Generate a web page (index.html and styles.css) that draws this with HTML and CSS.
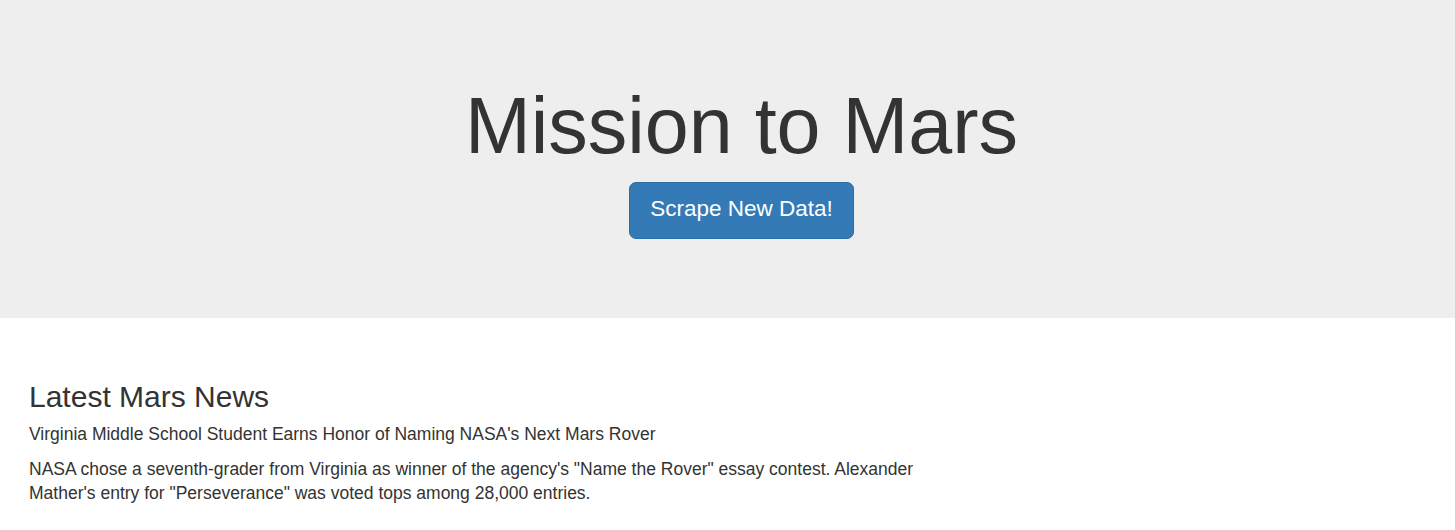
FILE: index.html
```html
<!DOCTYPE html>
<html lang="en">
<head>
<meta charset="utf-8">
<title>Mission to Mars</title>
<link rel="stylesheet" href="styles.css">
</head>
<body>
<header class="jumbotron">
  <h1 class="title">Mission to Mars</h1>
  <div class="actions">
    <a class="btn-primary" href="#">Scrape New Data!</a>
  </div>
</header>
<main class="content">
  <section class="news">
    <h3 class="news-heading">Latest Mars News</h3>
    <h4 class="news-title">Virginia Middle School Student Earns Honor of Naming NASA's Next Mars Rover</h4>
    <p class="news-body">NASA chose a seventh-grader from Virginia as winner of the agency's "Name the Rover" essay contest. Alexander Mather's entry for "Perseverance" was voted tops among 28,000 entries.</p>
  </section>
</main>
</body>
</html>
```
FILE: styles.css
```css
html, body {
  margin: 0;
  padding: 0;
}
body {
  font-family: "Liberation Sans", Arial, Helvetica, sans-serif;
  color: #333;
  background: #fff;
  font-size: 17.5px;
  line-height: 25px;
}
.jumbotron {
  background: #eee;
  text-align: center;
  padding: 60px 0 79px 28px;
}
.title {
  margin: 22px 0 13px;
  font-size: 79px;
  line-height: 87px;
  font-weight: 400;
  color: #333;
}
.actions {
  display: flex;
  justify-content: center;
}
.btn-primary {
  display: block;
  background: #337ab7;
  border: 1px solid #2e6da4;
  border-radius: 7px;
  color: #fff;
  text-decoration: none;
  font-size: 22.5px;
  line-height: 30px;
  padding: 11px 20px 14px;
}
.content {
  padding: 37px 29px 0;
}
.news {
  max-width: 910px;
}
.news-heading {
  margin: 25px 0 9px;
  font-size: 30px;
  line-height: 33px;
  font-weight: 400;
}
.news-title {
  margin: 0 0 10px;
  font-size: 17.5px;
  line-height: 25px;
  font-weight: 400;
}
.news-body {
  margin: 0;
  line-height: 24px;
}
```
